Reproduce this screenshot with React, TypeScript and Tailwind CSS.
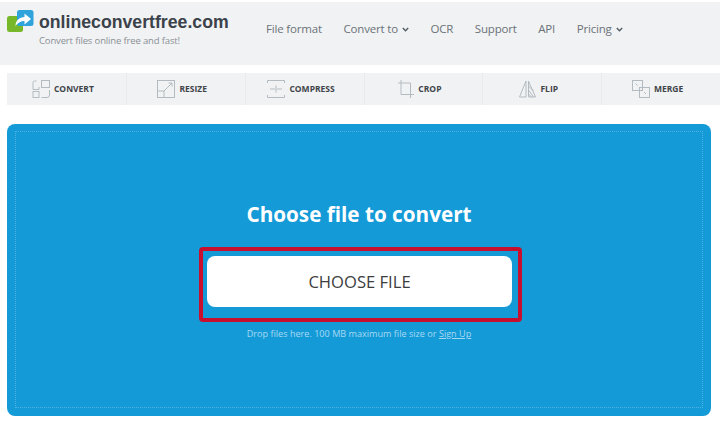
const F = "font-['Open_Sans','Noto_Sans',sans-serif]";
const S = { fill: "none", stroke: "#b4bbc0", strokeWidth: 1 };

function Convert() {
  return (
    <svg width="18" height="18" viewBox="0 0 18 18" {...S}>
      <path d="M4.500 1H2.500a1.500 1.500 0 0 0-1.500 1.500V9.500H7V7" />
      <rect x="1" y="11.500" width="6" height="6" />
      <rect x="9.500" y="0.500" width="8" height="7" />
      <path d="M9.500 17.500h5.500a2.500 2.500 0 0 0 2.500-2.500V10" />
    </svg>
  );
}
function Resize() {
  return (
    <svg width="18" height="18" viewBox="0 0 18 18" {...S}>
      <rect x="0.500" y="0.500" width="17" height="17" />
      <rect x="0.500" y="11" width="6.500" height="6.500" />
      <path d="M7 11l8-8M11.500 3H15v3.500" />
    </svg>
  );
}
function Compress() {
  return (
    <svg width="18" height="18" viewBox="0 0 18 18" {...S}>
      <path d="M0.500 3V0.500h17V3M0.500 15v2.500h17V15M3 9h5M10 9h5M9 5.500v7" />
    </svg>
  );
}
function Crop() {
  return (
    <svg width="16" height="18" viewBox="0 0 16 18" {...S}>
      <path d="M3 0v14.500h13M0 3h12.500v15" />
    </svg>
  );
}
function Flip() {
  return (
    <svg width="17" height="18" viewBox="0 0 17 18" {...S}>
      <path d="M0.500 17L7 1v16zM9.500 1l7 16h-7zM9.500 6l5 5M9.500 10l5 7M9.500 14l3 3" />
    </svg>
  );
}
function Merge() {
  return (
    <svg width="18" height="18" viewBox="0 0 18 18" {...S}>
      <rect x="0.500" y="0.500" width="10" height="10" />
      <rect x="7.500" y="7.500" width="10" height="10" />
      <path d="M3.500 3.500l2 2M14 14l-2-2" />
    </svg>
  );
}

const tools = [
  { label: "CONVERT", icon: <Convert /> },
  { label: "RESIZE", icon: <Resize /> },
  { label: "COMPRESS", icon: <Compress /> },
  { label: "CROP", icon: <Crop /> },
  { label: "FLIP", icon: <Flip /> },
  { label: "MERGE", icon: <Merge /> },
];

function Chevron() {
  return (
    <svg width="7" height="5" viewBox="0 0 7 5" fill="none" stroke="#565f66" strokeWidth="1.500">
      <path d="M0.800 1l2.700 2.700L6.200 1" />
    </svg>
  );
}

function Logo() {
  return (
    <svg width="27" height="22" viewBox="0 0 27 22" className="shrink-0">
      <rect x="0" y="6" width="16" height="16" rx="2.500" fill="#76b82a" />
      <rect x="10" y="0" width="16.500" height="16" rx="2.500" fill="#2ea3dc" />
      <path d="M8.500 16c0-5.500 4-9 9-9V3.500l6.500 5.500-6.500 5.500V11c-4 0-7 2-9 5z" fill="#fff" />
    </svg>
  );
}

export default function App() {
  return (
    <div className={`w-[720px] h-[421px] bg-white overflow-hidden pt-[2px] ${F}`}>
      <header className="h-[63px] bg-[#f1f2f4] flex">
        <div className="w-[239px] pl-[7px] pt-[8px] flex flex-col">
          <div className="flex items-start">
            <Logo />
            <span className="ml-[5px] mt-[1px] font-['Liberation_Sans',sans-serif] font-bold text-[17.700px] leading-[22px] text-[#3b424a]">
              onlineconvertfree.com
            </span>
          </div>
          <span className="ml-[32px] mt-[1px] text-[9.500px] tracking-[-0.15px] leading-[14px] text-[#8a9095]">
            Convert files online free and fast!
          </span>
        </div>
        <nav className="flex items-start gap-[21.500px] pl-[27px] pt-[19px] text-[11.500px] tracking-[-0.17px] leading-[16px] text-[#6b7278]">
          <span>File format</span>
          <span className="flex items-center gap-[4px]">Convert to <Chevron /></span>
          <span>OCR</span>
          <span>Support</span>
          <span>API</span>
          <span className="flex items-center gap-[4px]">Pricing <Chevron /></span>
        </nav>
      </header>
      <div className="mt-[8px] ml-[7px] h-[32px] bg-[#f1f2f4] grid grid-cols-6">
        {tools.map((t, i) => (
          <div
            key={t.label}
            className={`flex items-center justify-center gap-[4px] pr-[7px] ${i > 0 ? "border-l border-[#e9eaec]" : ""}`}
          >
            {t.icon}
            <span className="text-[8.500px] font-bold text-[#3f454a]">{t.label}</span>
          </div>
        ))}
      </div>
      <main className="mt-[19px] ml-[7px] w-[704px] h-[292px] rounded-[8px] bg-[#159ad8] px-[8px] pt-[7px] pb-[8px]">
        <div className="h-full border border-dotted border-[#4fb2e2] flex flex-col items-center pt-[68px]">
          <h1 className="text-[20.700px] leading-[28px] font-bold text-white">Choose file to convert</h1>
          <div className="mt-[19px] ml-[3px] w-[323px] h-[75px] border-[4px] border-[#c8102e] rounded-[4px] pl-[4px] pt-[5px]">
            <button className="block w-[305px] h-[51px] pt-[1px] bg-white rounded-[8px] text-[16.600px] text-[#3d3d3d]">
              CHOOSE FILE
            </button>
          </div>
          <p className="mt-[5px] text-[9.100px] leading-[14px] text-[#a6d9f2]">
            Drop files here. 100 MB maximum file size or <span className="underline">Sign Up</span>
          </p>
        </div>
      </main>
    </div>
  );
}
